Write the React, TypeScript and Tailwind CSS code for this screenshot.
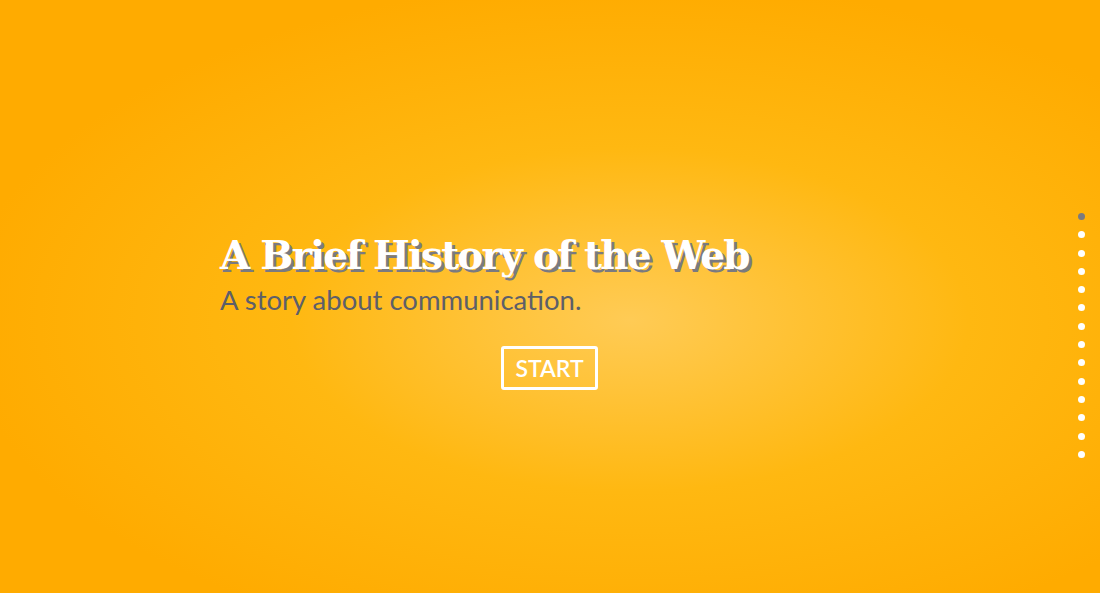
export default function App() {
  const dots = Array.from({ length: 14 }, (_, i) => i);

  return (
    <div className="relative h-[593px] w-[1100px] overflow-hidden bg-[radial-gradient(ellipse_at_630px_320px,#ffcb55_0%,#ffb811_38%,#ffab00_75%)]">
      {/* Intro */}
      <div className="flex flex-col pl-[220px] pt-[230px]">
        <h1 className="font-['DejaVu_Serif',serif] text-[39px] font-bold leading-[50px] tracking-[-1.8px] text-white [text-shadow:3px_3px_0_#7a7a80]">
          A Brief History of the Web
        </h1>
        <p className="mt-[2px] font-['Lato',sans-serif] text-[27.5px] leading-[36px] text-[#5d5f69]">
          A story about communication.
        </p>
        <div className="mt-[28px] pl-[281px]">
          <button className="flex h-[44px] w-[97px] items-center justify-center rounded-[3px] border-[3px] border-white font-['Lato',sans-serif] text-[23px] font-semibold text-white">
            START
          </button>
        </div>
      </div>

      {/* Slide nav */}
      <div className="absolute right-[15px] top-[213px] flex flex-col gap-[11.3px]">
        {dots.map((i) => (
          <span
            key={i}
            className={`block h-[7px] w-[7px] rounded-full ${i === 0 ? "bg-[#7a7a80]" : "bg-white"}`}
          />
        ))}
      </div>
    </div>
  );
}
